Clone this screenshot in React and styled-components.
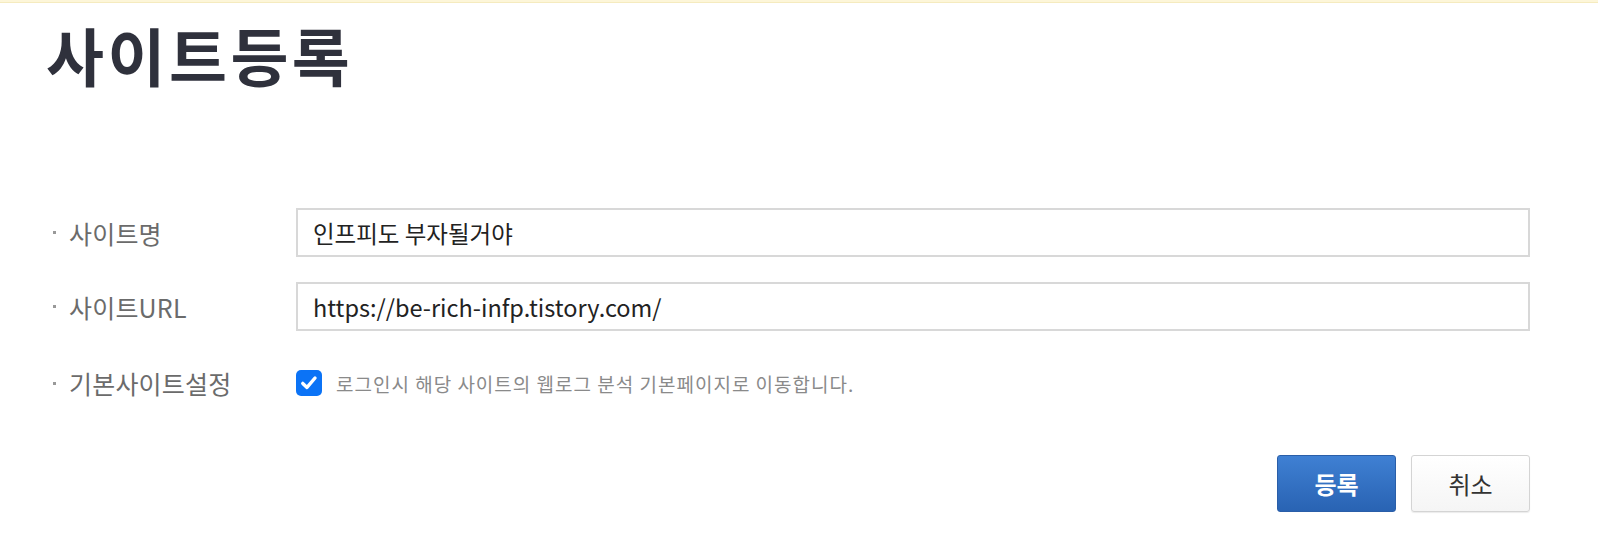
import styled, { createGlobalStyle } from 'styled-components';

const GlobalStyle = createGlobalStyle`
  body {
    margin: 0;
    background: #fff;
    font-family: 'Noto Sans CJK KR', 'Noto Sans', sans-serif;
  }
`;

const App = () => {
  return (
    <Page>
      <GlobalStyle />
      <TopBar />
      <Title>사이트등록</Title>
      <Form>
        <Row>
          <Label>사이트명</Label>
          <Input defaultValue="인프피도 부자될거야" />
        </Row>
        <Row>
          <Label>사이트URL</Label>
          <Input defaultValue="https://be-rich-infp.tistory.com/" />
        </Row>
        <Row $check>
          <Label>기본사이트설정</Label>
          <CheckLine>
            <Check>
              <svg width="20" height="20" viewBox="0 0 20 20">
                <path d="M3.8 10.4 L8 14.4 L16 5" fill="none" stroke="#fff" strokeWidth="3.4" strokeLinecap="round" strokeLinejoin="round" />
              </svg>
            </Check>
            <Desc>로그인시 해당 사이트의 웹로그 분석 기본페이지로 이동합니다.</Desc>
          </CheckLine>
        </Row>
      </Form>
      <Buttons>
        <Button $primary>등록</Button>
        <Button>취소</Button>
      </Buttons>
    </Page>
  );
};

const Page = styled.div`
  width: 1598px;
  height: 546px;
  overflow: hidden;
`;

const TopBar = styled.div`
  height: 2px;
  background: #fdf6d9;
  border-bottom: 1px solid #f5ebbf;
`;

const Title = styled.h1`
  margin: 11px 0 0 46px;
  height: 80px;
  font-family: 'Noto Sans CJK KR', sans-serif;
  font-size: 63px;
  font-weight: 700;
  letter-spacing: 3.5px;
  line-height: 80px;
  color: #2f313c;
`;

const Form = styled.div`
  margin-top: 114px;
  padding: 0 68px 0 53px;
  display: flex;
  flex-direction: column;
  gap: 25px;
`;

const Row = styled.div`
  display: grid;
  grid-template-columns: 243px 1fr;
  align-items: center;
  margin-top: ${(p) => (p.$check ? '9px' : '0')};
`;

const Label = styled.div`
  display: flex;
  align-items: center;
  font-size: 25px;
  letter-spacing: 0.2px;
  color: #6b6b6b;

  &::before {
    content: '';
    width: 3px;
    height: 3px;
    background: #999;
    margin-right: 13px;
  }
`;

const Input = styled.input`
  box-sizing: border-box;
  height: 49px;
  width: 100%;
  border: 2px solid #d8d8d8;
  padding: 0 15px;
  font-family: 'Noto Sans CJK KR', sans-serif;
  font-size: 23.5px;
  color: #222;
  outline: none;
`;

const CheckLine = styled.div`
  display: flex;
  align-items: center;
  gap: 14px;
`;

const Check = styled.span`
  width: 26px;
  height: 26px;
  border-radius: 5px;
  background: #0b73f6;
  display: flex;
  align-items: center;
  justify-content: center;
`;

const Desc = styled.span`
  font-size: 19px;
  letter-spacing: 1px;
  color: #8a8a8a;
`;

const Buttons = styled.div`
  display: flex;
  justify-content: flex-end;
  gap: 15px;
  padding-right: 68px;
  margin-top: 54px;
`;

const Button = styled.button`
  box-sizing: border-box;
  width: 119px;
  height: 57px;
  border-radius: 3px;
  font-family: 'Noto Sans CJK KR', sans-serif;
  font-size: 24px;
  font-weight: ${(p) => (p.$primary ? 700 : 400)};
  color: ${(p) => (p.$primary ? '#fff' : '#333')};
  border: 1px solid ${(p) => (p.$primary ? '#2a5ea8' : '#d4d4d4')};
  background: ${(p) =>
    p.$primary
      ? 'linear-gradient(180deg, #3f80d3 0%, #2963b3 100%)'
      : 'linear-gradient(180deg, #ffffff 0%, #f5f5f5 100%)'};
  box-shadow: ${(p) => (p.$primary ? 'none' : '0 1px 1px rgba(0,0,0,0.08)')};
  cursor: pointer;
`;

export default App;
